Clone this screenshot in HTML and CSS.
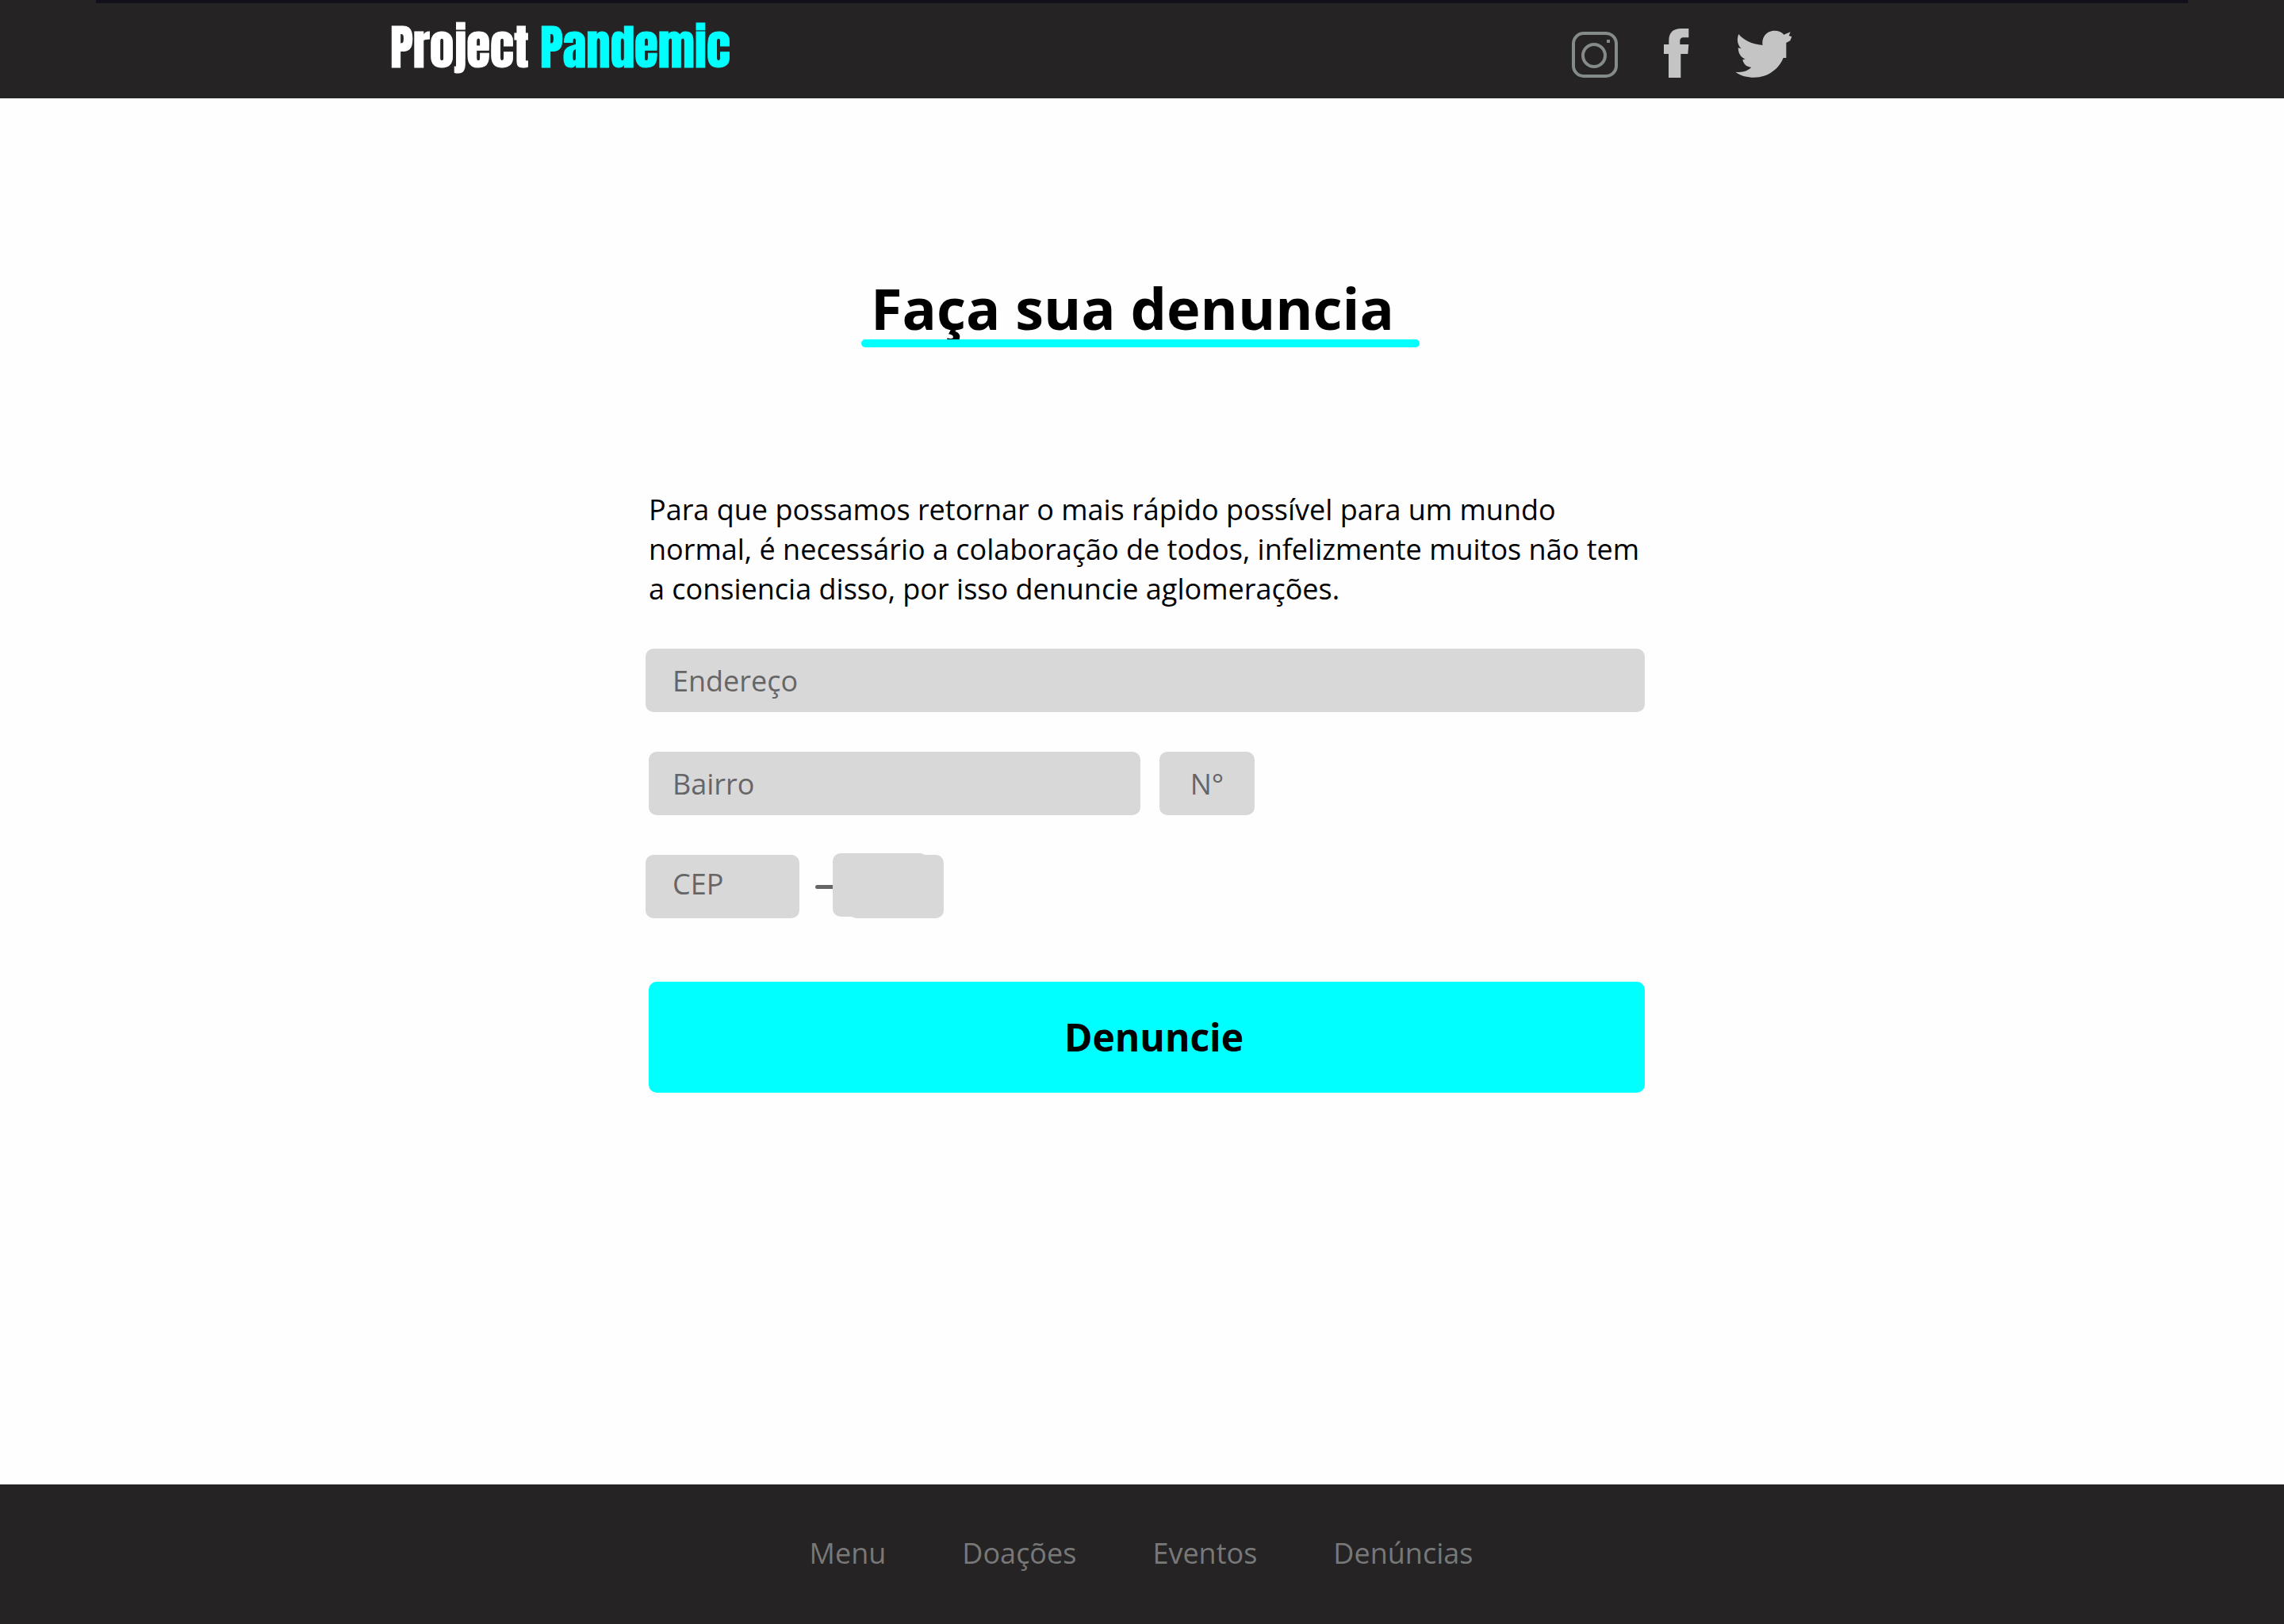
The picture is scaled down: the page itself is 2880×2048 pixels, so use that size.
FILE: index.html
```html
<!DOCTYPE html>
<html lang="pt-BR">
<head>
<meta charset="utf-8">
<meta name="viewport" content="width=device-width, initial-scale=1">
<title>Project Pandemic</title>
<link rel="stylesheet" href="styles.css">
</head>
<body>
<header class="site-header">
  <div class="header-inner">
    <a class="logo" href="#">Project <span class="logo-accent">Pandemic</span></a>
    <nav class="social" aria-label="Redes sociais">
      <a href="#" aria-label="Instagram">
        <svg class="icon icon-instagram" width="58" height="58" viewBox="0 0 58 58">
          <rect x="2" y="2" width="54" height="54" rx="13"/>
          <circle cx="28" cy="30" r="14"/>
          <rect class="dot" x="44" y="10" width="4" height="4"/>
        </svg>
      </a>
      <a href="#" aria-label="Facebook">
        <svg class="icon" width="32" height="62" viewBox="415 48 96 186">
          <path d="M433 234V144H415V108H434V92C434 62 452 48 480 48H509V82H490C480 82 476 88 476 96V108H509L506 144H479V234Z"/>
        </svg>
      </a>
      <a href="#" aria-label="Twitter">
        <svg class="icon" width="72" height="60" viewBox="684 55 216 180">
          <path d="M697 70C715 92 745 108 788 112C783 85 800 57 833 57C848 57 860 62 868 72L893 62L887 76L898 80L892 95L877 103V160H866C850 200 810 234 755 234C730 234 705 228 685 213C710 217 730 210 745 196C725 194 715 182 712 167L722 165C704 157 696 143 695 122L707 125C692 110 689 90 697 70Z"/>
        </svg>
      </a>
    </nav>
  </div>
</header>

<main class="content">
  <h1 class="title">Faça sua denuncia</h1>
  <form class="report">
    <p class="intro">Para que possamos retornar o mais rápido possível para um mundo normal, é necessário a colaboração de todos, infelizmente muitos não tem a consiencia disso, por isso denuncie aglomerações.</p>
    <input class="field" type="text" placeholder="Endereço" aria-label="Endereço">
    <div class="row row-indent">
      <input class="field field-district" type="text" placeholder="Bairro" aria-label="Bairro">
      <input class="field field-number" type="text" placeholder="N°" aria-label="Número">
    </div>
    <div class="row row-cep">
      <input class="field field-cep" type="text" placeholder="CEP" aria-label="CEP">
      <span class="dash"></span>
      <span class="suffix">
        <input class="field field-suffix" type="text" aria-label="Complemento do CEP">
      </span>
    </div>
    <button class="submit" type="submit">Denuncie</button>
  </form>
</main>

<footer class="site-footer">
  <a href="#">Menu</a>
  <a href="#">Doações</a>
  <a href="#">Eventos</a>
  <a href="#">Denúncias</a>
</footer>
</body>
</html>
```
FILE: styles.css
```css
* {
  box-sizing: border-box;
}

body {
  margin: 0;
  min-height: 100vh;
  display: flex;
  flex-direction: column;
  background: #fefefe;
  color: #000;
  font-family: "Open Sans", "Noto Sans", sans-serif;
  font-size: 36px;
  line-height: 50px;
}

a {
  color: inherit;
  text-decoration: none;
}

/* Header */
.site-header {
  background: linear-gradient(#12111b, #12111b) center top / calc(100% - 242px) 4px no-repeat #252324;
}

.header-inner {
  max-width: 1896px;
  height: 124px;
  margin: 0 auto;
  padding-right: 128px;
  display: flex;
  justify-content: space-between;
}

.logo {
  padding-top: 29px;
  color: #fff;
  font-family: Impact, Anton, "Liberation Sans Narrow", "Roboto Condensed", "Liberation Sans", sans-serif;
  font-size: 61px;
  font-weight: 400;
  line-height: 60px;
  white-space: nowrap;
  -webkit-text-stroke: 1px currentColor;
}

.logo-accent {
  color: #0ff;
  -webkit-text-stroke: 1px currentColor;
}

.social {
  display: flex;
  align-items: flex-end;
  gap: 58px;
  padding-bottom: 26px;
}

.icon {
  display: block;
  fill: #c4c4c4;
}

.icon-instagram {
  fill: none;
  stroke: #858b8b;
  stroke-width: 4px;
}

.icon-instagram .dot {
  fill: #858b8b;
  stroke: none;
}

/* Report form */
.content {
  flex: 1;
  display: flex;
  flex-direction: column;
  align-items: center;
  padding: 216px 24px 120px 32px;
}

.title {
  position: relative;
  margin: 0 12px 0 0;
  padding: 0 32px 2px 12px;
  font-size: 72px;
  line-height: 96px;
}

.title::after {
  content: "";
  position: absolute;
  left: 0;
  right: 0;
  bottom: 0;
  height: 10px;
  border-radius: 5px;
  background: #0ff;
}

.report {
  width: 100%;
  max-width: 1260px;
  margin-top: 180px;
  display: flex;
  flex-direction: column;
}

.intro {
  margin: 0 0 50px;
  padding-left: 4px;
}

.field {
  width: 100%;
  height: 80px;
  border: 0;
  border-radius: 10px;
  padding: 0 34px;
  background: #d8d8d8;
  color: #666;
  font: inherit;
}

.field::placeholder {
  color: #666;
  opacity: 1;
}

.row {
  display: flex;
  align-items: center;
  margin-top: 50px;
}

.row-indent {
  gap: 24px;
  padding-left: 4px;
}

.row-indent .field {
  padding: 0 30px;
}

.field-district {
  max-width: 620px;
}

.row-indent .field-number {
  width: 120px;
  padding: 0;
  text-align: center;
}

.field-cep {
  width: 194px;
  padding-bottom: 8px;
}

.dash {
  width: 28px;
  height: 5px;
  margin-left: 20px;
  border-radius: 3px;
  background: #666;
}

/* Two overlapping plates form the CEP suffix box */
.suffix {
  position: relative;
  width: 140px;
  margin-left: -6px;
  padding-left: 20px;
}

.suffix::before {
  content: "";
  position: absolute;
  left: 0;
  top: -2px;
  width: 120px;
  height: 80px;
  border-radius: 10px;
  background: #d8d8d8;
}

.field-suffix {
  display: block;
  position: relative;
}

.submit {
  height: 140px;
  margin: 80px 0 0 4px;
  border: 0;
  border-radius: 10px;
  padding: 0 0 0 18px;
  background: #0ff;
  color: #000;
  font: inherit;
  font-size: 48px;
  font-weight: 700;
}

/* Footer */
.site-footer {
  display: flex;
  flex-wrap: wrap;
  justify-content: center;
  gap: 0 96px;
  padding: 62px 26px 64px 24px;
  background: #252324;
  color: #787878;
}
```
